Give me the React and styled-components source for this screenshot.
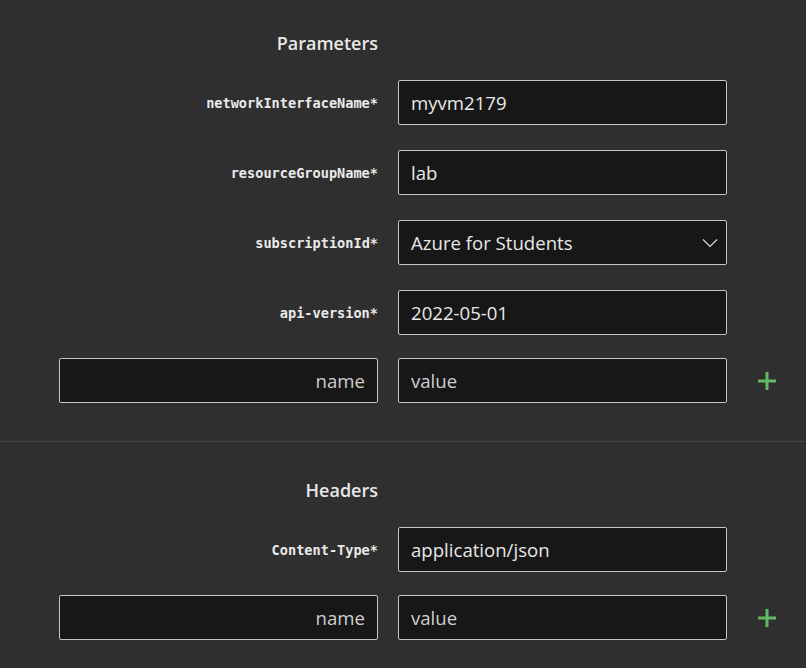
import React from 'react';
import styled, { createGlobalStyle } from 'styled-components';

const GlobalStyle = createGlobalStyle`
  html, body {
    margin: 0;
    padding: 0;
    background: #2f2f2f;
  }
  body {
    font-family: "Open Sans", "Noto Sans", sans-serif;
    color: #e6e6e6;
  }
`;

const Page = styled.div`
  width: 806px;
  min-height: 668px;
  background: #2f2f2f;
`;

const Section = styled.section`
  padding: ${props => props.top}px 0 38px 59px;
  border-top: ${props => (props.divider ? '1px solid #444' : 'none')};
`;

const Grid = styled.div`
  display: grid;
  grid-template-columns: 319px 329px 40px;
  column-gap: 20px;
  row-gap: 25px;
  align-items: center;
`;

const Title = styled.h2`
  grid-column: 1;
  margin: -1px 0 0;
  text-align: right;
  font-size: 18px;
  font-weight: 600;
  line-height: 24px;
  color: #e8e8e8;
`;

const Label = styled.label`
  grid-column: 1;
  text-align: right;
  font-family: "DejaVu Sans Mono", "Liberation Mono", monospace;
  font-weight: 700;
  font-size: 13.6px;
  color: #eaeaea;
`;

const Input = styled.input`
  box-sizing: border-box;
  width: 100%;
  height: 45px;
  margin-top: ${props => (props.$tight ? '-2px' : '0')};
  padding: 0 12px;
  background: #171717;
  border: 1px solid #c6c6c6;
  border-radius: 2px;
  font-family: "Open Sans", "Noto Sans", sans-serif;
  font-size: 18.6px;
  color: #e8e8e8;
  text-align: ${props => props.$align || 'left'};
  outline: none;

  &::placeholder {
    color: #cfcfcf;
    opacity: 1;
  }
`;

const SelectBox = styled.div`
  box-sizing: border-box;
  height: 45px;
  display: flex;
  align-items: center;
  justify-content: space-between;
  padding: 0 8px 0 12px;
  background: #171717;
  border: 1px solid #c6c6c6;
  border-radius: 2px;
  font-size: 18.6px;
  color: #e8e8e8;
  cursor: pointer;
`;

const AddButton = styled.button`
  justify-self: start;
  margin: ${props => (props.$tight ? '-2px' : '0')} 0 0 10px;
  padding: 0;
  width: 20px;
  height: 20px;
  border: none;
  background: transparent;
  display: flex;
  align-items: center;
  justify-content: center;
  cursor: pointer;
`;

const Chevron = () => (
  <svg width="16" height="10" viewBox="0 0 16 10" fill="none">
    <path d="M1 1.5 L8 8.5 L15 1.5" stroke="#d8d8d8" strokeWidth="1.2" />
  </svg>
);

const Plus = () => (
  <svg width="18" height="18" viewBox="0 0 18 18">
    <rect x="7.5" y="0" width="3" height="18" fill="#62b865" />
    <rect x="0" y="7.5" width="18" height="3" fill="#62b865" />
  </svg>
);

const params = [
  { name: 'networkInterfaceName', value: 'myvm2179' },
  { name: 'resourceGroupName', value: 'lab' },
  { name: 'subscriptionId', value: 'Azure for Students', select: true },
  { name: 'api-version', value: '2022-05-01' },
];

const headers = [
  { name: 'Content-Type', value: 'application/json' },
];

const ParamSection = ({ title, items, top, divider }) => (
  <Section top={top} divider={divider}>
    <Grid>
      <Title>{title}</Title>
      <span />
      <span />
      {items.map((item) => (
        <React.Fragment key={item.name}>
          <Label>{`${item.name}*`}</Label>
          {item.select ? (
            <SelectBox>
              <span>{item.value}</span>
              <Chevron />
            </SelectBox>
          ) : (
            <Input defaultValue={item.value} />
          )}
          <span />
        </React.Fragment>
      ))}
      <Input placeholder="name" $align="right" $tight />
      <Input placeholder="value" $tight />
      <AddButton $tight aria-label="add">
        <Plus />
      </AddButton>
    </Grid>
  </Section>
);

const App = () => (
  <Page>
    <GlobalStyle />
    <ParamSection title="Parameters" items={params} top={32} />
    <ParamSection title="Headers" items={headers} top={37} divider />
  </Page>
);

export default App;
